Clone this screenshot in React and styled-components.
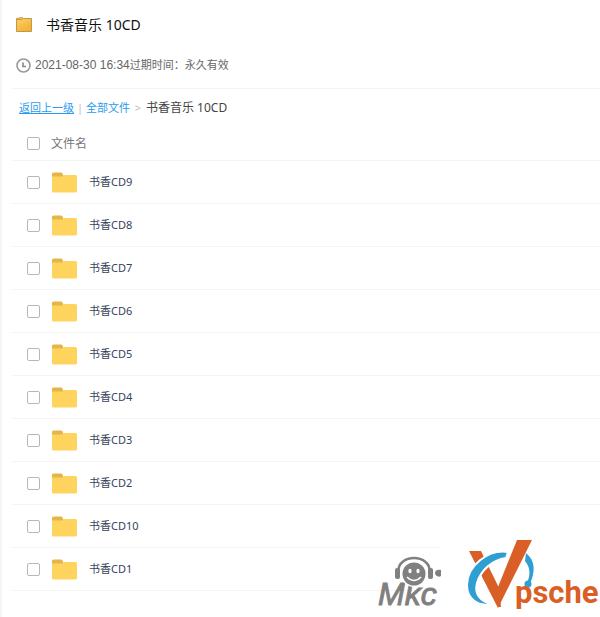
import React, { useState } from "react";
import styled, { createGlobalStyle } from "styled-components";

const folders = [
  "书香CD9",
  "书香CD8",
  "书香CD7",
  "书香CD6",
  "书香CD5",
  "书香CD4",
  "书香CD3",
  "书香CD2",
  "书香CD10",
  "书香CD1",
];

function App() {
  const [checked, setChecked] = useState([]);
  const allChecked = checked.length === folders.length;

  const toggle = (name) =>
    setChecked((list) =>
      list.includes(name) ? list.filter((n) => n !== name) : [...list, name]
    );

  return (
    <Page>
      <GlobalStyle />
      <Header>
        <TitleRow>
          <ShareIcon />
          <Title>书香音乐 10CD</Title>
        </TitleRow>
        <Meta>
          <ClockIcon />
          <time dateTime="2021-08-30T16:34">2021-08-30 16:34</time>
          <Expire>过期时间：永久有效</Expire>
        </Meta>
      </Header>

      <Breadcrumb aria-label="breadcrumb">
        <CrumbLink href="#back" $underline>
          返回上一级
        </CrumbLink>
        <Divider>|</Divider>
        <CrumbLink href="#all">全部文件</CrumbLink>
        <Divider $wide>&gt;</Divider>
        <Current>书香音乐 10CD</Current>
      </Breadcrumb>

      <ListHead>
        <Checkbox
          id="check-all"
          checked={allChecked}
          onChange={() => setChecked(allChecked ? [] : folders)}
        />
        <HeadLabel htmlFor="check-all">文件名</HeadLabel>
      </ListHead>
      <List>
        {folders.map((name) => (
          <Row key={name}>
            <Checkbox
              id={name}
              checked={checked.includes(name)}
              onChange={() => toggle(name)}
            />
            <FolderIcon />
            <FileName htmlFor={name}>{name}</FileName>
          </Row>
        ))}
      </List>

      <Watermarks>
        <HeadphoneLogo />
        <LogoPlate>
          <CheckLogo />
        </LogoPlate>
      </Watermarks>
    </Page>
  );
}

const ShareIcon = () => (
  <svg width="17" height="16" viewBox="0 0 17 16" aria-hidden="true">
    <defs>
      <linearGradient id="share" x1="0" y1="0" x2="0.6" y2="1">
        <stop offset="0" stopColor="#fbd468" />
        <stop offset="1" stopColor="#f0b236" />
      </linearGradient>
    </defs>
    <path
      d="M.5 1.5 6 .5l1.5 1H15.5V14.5H.5z"
      fill="url(#share)"
      stroke="#c4974a"
    />
    <path d="M1 2.5h5l1-1" stroke="#d09a32" fill="none" />
  </svg>
);

const ClockIcon = () => (
  <svg width="15" height="15" viewBox="0 0 15 15" fill="none" aria-hidden="true">
    <circle cx="7.5" cy="7.5" r="6.5" stroke="#999" strokeWidth="1.6" />
    <path d="M7 4.500v4h3" stroke="#888" strokeWidth="1.6" />
  </svg>
);

const FolderIcon = () => (
  <svg width="25" height="21" viewBox="0 0 25 21" aria-hidden="true">
    <path d="M0 6V2Q0 .5 1.500 .5H9q1 0 1.500 1L12 5z" fill="#e6b548" />
    <path
      d="M0 4.500h10.500L12 3h11.500Q25 3 25 4.500v14.500q0 1.500-1.500 1.500h-22Q0 20.500 0 19z"
      fill="#ffd45e"
    />
  </svg>
);

const HeadphoneLogo = () => (
  <svg width="64" height="58" viewBox="0 0 64 58" role="img" aria-label="Mkc">
    <text
      x="1"
      y="51"
      fill="#808080"
      stroke="#808080"
      strokeWidth="1"
      fontFamily="'Liberation Sans', sans-serif"
      fontStyle="italic"
      fontSize="32"
    >
      Mkc
    </text>
    <circle cx="37" cy="20" r="13" fill="#fff" />
    <circle cx="37" cy="20" r="11.500" fill="#808080" />
    <path
      d="M21.500 16a15.500 12 0 0 1 31 0"
      fill="none"
      stroke="#808080"
      strokeWidth="2.500"
    />
    <rect x="18" y="14" width="5" height="11" rx="2" fill="#808080" />
    <rect x="51" y="14" width="5" height="11" rx="2" fill="#808080" />
    <ellipse cx="33" cy="17" rx="1.600" ry="2.200" fill="#fff" />
    <ellipse cx="41" cy="17" rx="1.600" ry="2.200" fill="#fff" />
    <path d="M30 23q7 7 14 0" fill="none" stroke="#fff" strokeWidth="1.500" />
    <path d="M64 16c-4-1-6 1-6 3s3 5 6 3z" fill="#808080" />
  </svg>
);

const CheckLogo = () => (
  <svg width="138" height="76" viewBox="0 0 138 76" role="img" aria-label="Vpsche">
    <path d="M7 15h12l18 37-1 20z" fill="#d95f27" />
    <path
      d="M46 16C26 13 5 30 5 49c0 14 11 22 24 19C18 65 12 58 15 47 19 34 30 24 44 22z"
      fill="#2f9fd3"
      stroke="#fff"
      strokeWidth="2"
    />
    <path d="M20 40l8-4 9 17 2 18h-3z" fill="#d95f27" />
    <path d="M55 4h15L36 72 34 56z" fill="#d95f27" />
    <path d="M64 17c10 8 9 19 4 31l-3-1c4-9 3-16-2-22z" fill="#2f9fd3" />
    <circle cx="66" cy="48" r="3.500" fill="#2f9fd3" />
    <text
      x="53"
      y="67"
      fill="#d95f27"
      fontFamily="Roboto, sans-serif"
      fontWeight="700"
      fontSize="31"
    >
      psche
    </text>
  </svg>
);

const GlobalStyle = createGlobalStyle`
  * {
    box-sizing: border-box;
  }

  body {
    margin: 0;
    background: #fff;
    color: #333;
    font-family: "Noto Sans", "Noto Sans CJK SC", sans-serif;
    font-size: 12px;
  }
`;

const Page = styled.main`
  position: relative;
  min-height: 100vh;
  padding-left: 10px;
  border-left: 2px solid #f5f5f5;
  overflow: hidden;
`;

const Header = styled.header`
  padding: 14px 0 13px 4px;
  border-bottom: 1px solid #f4f4f4;
`;

const TitleRow = styled.div`
  display: flex;
  align-items: center;
  gap: 13px;
  height: 22px;
`;

const Title = styled.h1`
  margin: 0;
  color: #111;
  font-size: 14px;
  font-weight: 400;
  line-height: 22px;
`;

const Meta = styled.div`
  display: flex;
  align-items: center;
  height: 20px;
  margin-top: 19px;
  color: #666;
  font-family: "Liberation Sans", "Noto Sans CJK SC", sans-serif;
  line-height: 20px;

  svg {
    margin-right: 4px;
  }
`;

const Expire = styled.span`
  font-size: 11px;
`;

const Breadcrumb = styled.nav`
  display: flex;
  align-items: center;
  height: 38px;
  padding-left: 7px;
  line-height: 20px;
`;

const CrumbLink = styled.a`
  color: #2a9bec;
  font-size: 11px;
  text-decoration: ${(props) => (props.$underline ? "underline" : "none")};
`;

const Divider = styled.span`
  width: ${(props) => (props.$wide ? "16px" : "12px")};
  color: #bbb;
  font-size: 11px;
  text-align: center;
`;

const Current = styled.span`
  color: #444;
`;

const ListHead = styled.div`
  display: flex;
  align-items: center;
  gap: 11px;
  height: 34px;
  padding-left: 15px;
  border-bottom: 1px solid #f4f4f4;
`;

const HeadLabel = styled.label`
  color: #777;
  line-height: 20px;
`;

const List = styled.ul`
  margin: 0;
  padding: 0;
  list-style: none;
`;

const Row = styled.li`
  display: flex;
  align-items: center;
  gap: 12px;
  height: 43px;
  padding-left: 15px;
  border-bottom: 1px solid #f4f4f4;
`;

const Checkbox = styled.input.attrs({ type: "checkbox" })`
  appearance: none;
  flex: none;
  width: 13px;
  height: 13px;
  margin: 0;
  border: 1px solid #b4b7bd;
  border-radius: 2px;
  background: #fff;

  &:checked {
    background: #2a9bec;
    border-color: #2a9bec;
  }
`;

const FileName = styled.label`
  color: #36425c;
  font-size: 11px;
  line-height: 20px;
`;

const Watermarks = styled.div`
  position: absolute;
  right: 0;
  bottom: 5px;
  display: flex;
  align-items: flex-end;
`;

const LogoPlate = styled.div`
  display: flex;
  padding-left: 21px;
  background: #fff;
`;

export default App;
